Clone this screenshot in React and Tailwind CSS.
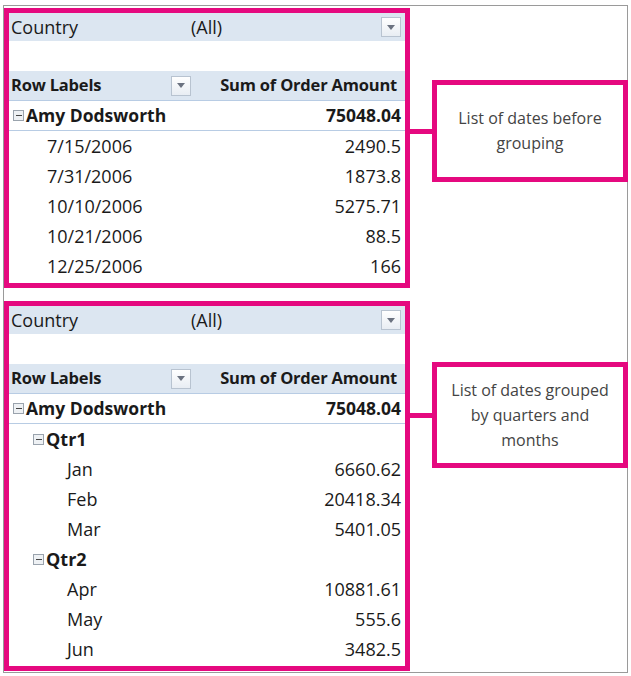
const PINK = "border-[#e5097f]";

function Arrow() {
  return (
    <span className="inline-flex items-center justify-center w-[20px] h-[20px] border border-[#b8c3d0] bg-gradient-to-b from-white to-[#e8edf3]">
      <svg width="8" height="5" viewBox="0 0 8 5"><path d="M0 0h8L4 5z" fill="#6b7280" /></svg>
    </span>
  );
}
function Minus() {
  return (
    <span className="inline-flex items-center justify-center w-[11px] h-[11px] border border-[#9aa3ad] bg-[#eef1f4] mr-[2px]">
      <span className="w-[6px] h-[1px] bg-[#444]" />
    </span>
  );
}

function Pivot({ rows, h }) {
  return (
    <div className={`w-[406px] border-[5px] ${PINK} bg-white text-[18px] text-[#1a1a1a]`} style={{ fontFamily: "'Open Sans', 'Liberation Sans', sans-serif", height: h }}>
      <div className="h-[28px] bg-[#dce6f1] flex items-center justify-between pl-[2px] pr-[4px]">
        <span className="w-[180px]">Country</span>
        <span className="flex-1">(All)</span>
        <Arrow />
      </div>
      <div className="h-[30px]" />
      <div className="h-[30px] bg-[#dce6f1] flex items-center pl-[2px] pr-[8px] font-bold text-[16.5px] tracking-[-0.2px] border-b border-[#b8cce4]">
        <span className="w-[160px]">Row Labels</span>
        <Arrow />
        <span className="ml-auto">Sum of Order Amount</span>
      </div>
      <div className="h-[30px] flex items-center pl-[4px] pr-[4px] font-bold text-[17.5px] border-b border-[#b8cce4]">
        <Minus />
        <span>Amy Dodsworth</span>
        <span className="ml-auto">75048.04</span>
      </div>
      {rows.map((r, i) => (
        <div key={i} className={`h-[30px] flex items-center pr-[4px] ${r.q ? "pl-[24px] font-bold" : r.m ? "pl-[58px]" : "pl-[38px]"}`}>
          {r.q && <Minus />}
          <span>{r.l}</span>
          <span className="ml-auto">{r.v}</span>
        </div>
      ))}
    </div>
  );
}

function Callout({ children, top }) {
  return (
    <div className="flex items-center">
      <div className="w-[22px] h-[5px] bg-[#e5097f]" />
      <div className={`w-[196px] border-[5px] ${PINK} bg-white flex items-center justify-center text-center text-[16px] text-[#444] leading-[25px]`} style={{ fontFamily: "'Open Sans', 'Liberation Sans', sans-serif", height: top }}>
        {children}
      </div>
    </div>
  );
}

export default function App() {
  const r1 = [
    { l: "7/15/2006", v: "2490.5" },
    { l: "7/31/2006", v: "1873.8" },
    { l: "10/10/2006", v: "5275.71" },
    { l: "10/21/2006", v: "88.5" },
    { l: "12/25/2006", v: "166" },
  ];
  const r2 = [
    { l: "Qtr1", v: "", q: 1 },
    { l: "Jan", v: "6660.62", m: 1 },
    { l: "Feb", v: "20418.34", m: 1 },
    { l: "Mar", v: "5401.05", m: 1 },
    { l: "Qtr2", v: "", q: 1 },
    { l: "Apr", v: "10881.61", m: 1 },
    { l: "May", v: "555.6", m: 1 },
    { l: "Jun", v: "3482.5", m: 1 },
  ];
  return (
    <div className="w-[631px] h-[676px] bg-white relative overflow-hidden">
      <div className="absolute left-[3px] top-[5px] w-[625px] h-[668px] border border-[#9a9a9a]" />
      <div className="relative flex flex-col gap-[13px] pt-[8px] pl-[4px]">
        <div className="flex items-start">
          <Pivot rows={r1} h={280} />
          <div className="mt-[72px]"><Callout top={102}>List of dates before<br />grouping</Callout></div>
        </div>
        <div className="flex items-start">
          <Pivot rows={r2} h={370} />
          <div className="mt-[61px]"><Callout top={106}>List of dates grouped<br />by quarters and<br />months</Callout></div>
        </div>
      </div>
    </div>
  );
}
